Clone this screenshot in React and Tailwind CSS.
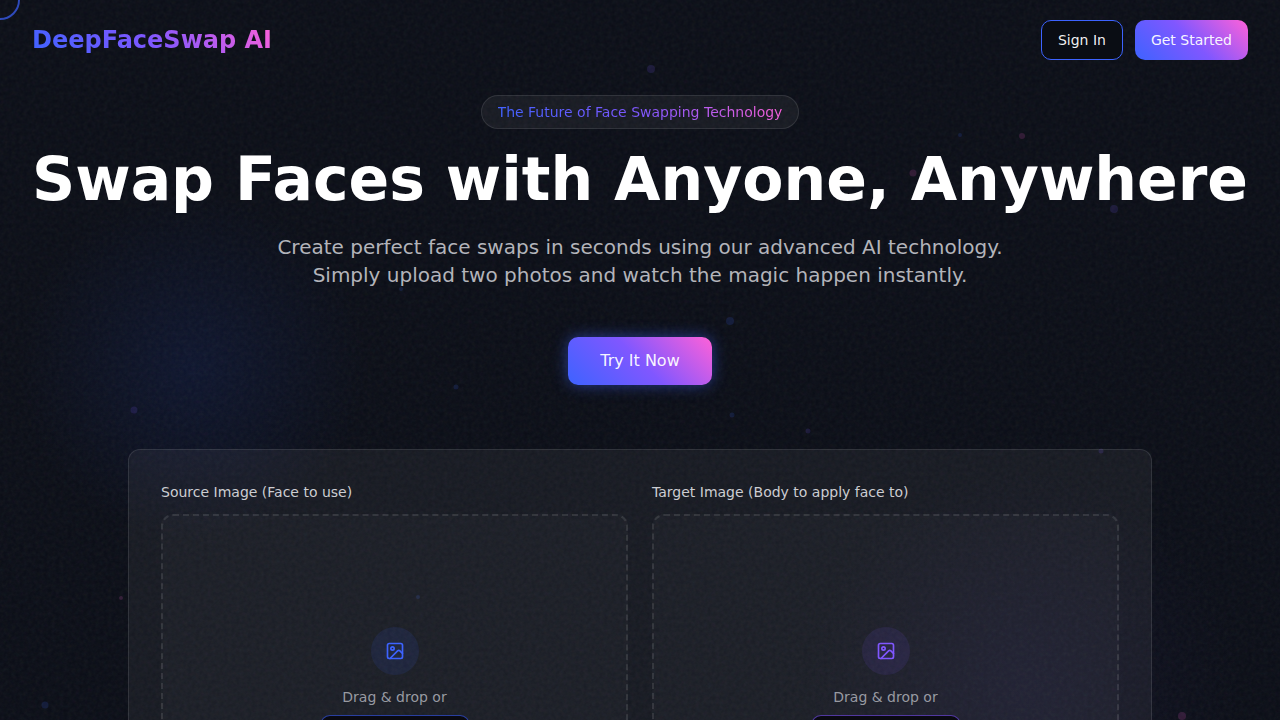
import { Image } from 'lucide-react';

const particles = [
  { x: 651, y: 69, size: 8, color: 'bg-[#7b5aff]' },
  { x: 960, y: 135, size: 4, color: 'bg-[#3d63ff]' },
  { x: 1022, y: 136, size: 6, color: 'bg-[#ff61d8]' },
  { x: 913, y: 173, size: 7, color: 'bg-[#ff61d8]' },
  { x: 1114, y: 209, size: 8, color: 'bg-[#7b5aff]' },
  { x: 617, y: 245, size: 5, color: 'bg-[#3d63ff]' },
  { x: 401, y: 289, size: 4, color: 'bg-[#3d63ff]' },
  { x: 730, y: 321, size: 8, color: 'bg-[#3d63ff]' },
  { x: 456, y: 387, size: 5, color: 'bg-[#3d63ff]' },
  { x: 134, y: 410, size: 7, color: 'bg-[#7b5aff]' },
  { x: 732, y: 415, size: 5, color: 'bg-[#3d63ff]' },
  { x: 808, y: 431, size: 5, color: 'bg-[#7b5aff]' },
  { x: 1101, y: 451, size: 5, color: 'bg-[#7b5aff]' },
  { x: 121, y: 598, size: 4, color: 'bg-[#ff61d8]' },
  { x: 418, y: 597, size: 4, color: 'bg-[#3d63ff]' },
  { x: 45, y: 705, size: 7, color: 'bg-[#3d63ff]' },
  { x: 1182, y: 716, size: 8, color: 'bg-[#ff61d8]' },
];

const Background = () => (
  <div className="pointer-events-none absolute inset-0 overflow-hidden">
    <div className="absolute left-[15%] top-[366px] h-[380px] w-[380px] -translate-x-1/2 -translate-y-1/2 bg-[radial-gradient(circle,rgba(45,90,255,0.1),transparent_65%)]" />
    <div className="absolute left-[80%] top-[690px] h-[480px] w-[480px] -translate-x-1/2 -translate-y-1/2 bg-[radial-gradient(circle,rgba(123,90,255,0.06),transparent_65%)]" />

    {particles.map((p) => (
      <span
        key={`${p.x}-${p.y}`}
        className={`absolute -translate-x-1/2 -translate-y-1/2 rounded-full opacity-15 ${p.color}`}
        style={{ left: `${(p.x / 1280) * 100}%`, top: p.y, width: p.size, height: p.size }}
      />
    ))}

    {/* Grain */}
    <svg className="absolute inset-0 h-full w-full opacity-[0.06]" aria-hidden="true">
      <filter id="grain">
        <feTurbulence type="fractalNoise" baseFrequency="0.25" numOctaves="3" stitchTiles="stitch" />
      </filter>
      <rect width="100%" height="100%" filter="url(#grain)" />
    </svg>
  </div>
);

const UploadBox = ({ label, iconClass, buttonClass }) => (
  <section className="flex flex-col gap-3">
    <h2 className="text-sm text-[#cccdd2]">{label}</h2>
    <div className="flex aspect-4/3 flex-col items-center justify-center rounded-xl border-2 border-dashed border-white/10 bg-white/[0.02]">
      <div className={`mb-3 flex h-12 w-12 items-center justify-center rounded-full ${iconClass}`}>
        <Image size={20} />
      </div>
      <p className="mb-2 text-sm text-[#989aa2]">Drag &amp; drop or</p>
      <button className={`h-9 w-[150px] rounded-[10px] border bg-[#0a0a12] text-sm text-white/90 ${buttonClass}`}>
        Browse Files
      </button>
    </div>
  </section>
);

export default function App() {
  return (
    <div className="relative min-h-screen overflow-hidden bg-[#0a0d16] font-['DejaVu_Sans',sans-serif] text-white">
      <Background />

      {/* Cursor ring */}
      <div className="pointer-events-none absolute -left-5 -top-5 z-10 h-10 w-10 rounded-full border-2 border-[#3d63ff] opacity-70" />

      <header className="relative flex h-20 items-center justify-between px-8">
        <a href="#" className="bg-linear-45/srgb from-[#3d63ff] via-[#8057ff] to-[#ff61d8] bg-clip-text text-2xl font-bold text-transparent">
          DeepFaceSwap AI
        </a>
        <div className="flex gap-3">
          <button className="h-10 rounded-[10px] border border-[#3d63ff] bg-[#0a0d14] px-4 text-sm text-white/95">
            Sign In
          </button>
          <button className="h-10 rounded-[10px] bg-linear-45/srgb from-[#3d63ff] via-[#8057ff] to-[#ff61d8] px-4 text-sm text-white/95">
            Get Started
          </button>
        </div>
      </header>

      <main className="relative flex flex-col items-center px-4 pt-[15px] pb-16 text-center">
        <div className="mb-5 rounded-full border border-white/10 bg-white/5 px-4 py-[6px] text-sm">
          <span className="block bg-linear-45/srgb from-[#3d63ff] via-[#8057ff] to-[#ff61d8] bg-clip-text text-transparent">
            The Future of Face Swapping Technology
          </span>
        </div>

        <h1 className="mb-6 text-6xl leading-[60px] font-bold">Swap Faces with Anyone, Anywhere</h1>

        <p className="mb-12 max-w-3xl text-xl leading-7 text-[#b3b4ba]">
          Create perfect face swaps in seconds using our advanced AI technology. Simply upload two photos and watch the magic happen instantly.
        </p>

        <button className="mb-16 h-12 rounded-[10px] bg-linear-45/srgb from-[#3d63ff] via-[#8057ff] to-[#ff61d8] px-8 text-base text-white/95 shadow-[0_0_15px_rgba(61,99,255,0.5)]">
          Try It Now
        </button>

        <div className="w-full max-w-5xl rounded-xl border border-white/10 bg-white/5 p-8 text-left">
          <div className="grid grid-cols-1 gap-6 md:grid-cols-2">
            <UploadBox
              label="Source Image (Face to use)"
              iconClass="bg-[#3d63ff]/10 text-[#3d63ff]"
              buttonClass="border-[#3d63ff]/60"
            />
            <UploadBox
              label="Target Image (Body to apply face to)"
              iconClass="bg-[#8057ff]/10 text-[#8057ff]"
              buttonClass="border-[#8057ff]/60"
            />
          </div>
        </div>
      </main>
    </div>
  );
}
